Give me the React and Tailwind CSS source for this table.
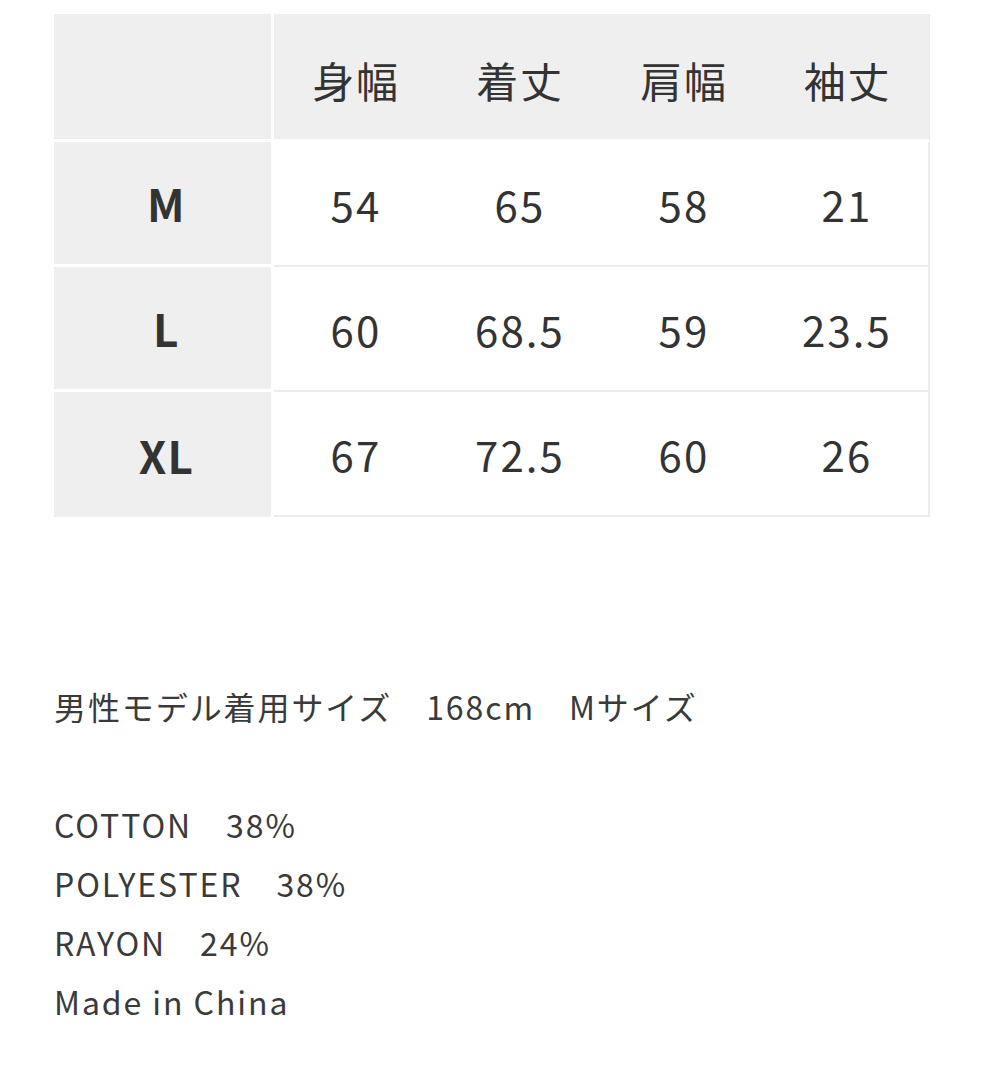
import React from 'react'

const headers = ['身幅', '着丈', '肩幅', '袖丈']
const rows = [
  { size: 'M', values: ['54', '65', '58', '21'] },
  { size: 'L', values: ['60', '68.5', '59', '23.5'] },
  { size: 'XL', values: ['67', '72.5', '60', '26'] },
]

const font = { fontFamily: '"Noto Sans CJK JP", "Noto Sans", sans-serif' }

const App = () => {
  return (
    <div className="min-h-screen bg-white text-[#333]" style={font}>
      <div className="ml-[54px] pt-[14px] w-[876px]">
        {/* Size table */}
        <div className="grid grid-cols-[220px_repeat(4,1fr)]">
          <div className="h-[128px] bg-[#efefef] border-r-[3px] border-b-[3px] border-white" />
          {headers.map((h, i) => (
            <div
              key={h}
              className={`h-[128px] pt-[6px] bg-[#efefef] border-b-[3px] border-white flex items-center justify-center text-[42px] tracking-[0.04em] ${i === 3 ? 'border-r border-r-[#eaeaea]' : ''}`}
            >
              {h}
            </div>
          ))}
          {rows.map((row, r) => (
            <React.Fragment key={row.size}>
              <div
                className={`h-[125px] pl-[8px] bg-[#efefef] border-r-[3px] border-white flex items-center justify-center text-[44px] font-bold tracking-[0.03em] ${r < 2 ? 'border-b-[3px]' : ''}`}
              >
                {row.size}
              </div>
              {row.values.map((v, i) => (
                <div
                  key={i}
                  className={`h-[125px] bg-white border-b-2 border-[#ececec] flex items-center justify-center text-[42px] tracking-[0.05em] ${i === 3 ? 'border-r-2' : ''}`}
                >
                  {v}
                </div>
              ))}
            </React.Fragment>
          ))}
        </div>

        {/* Notes */}
        <div className="mt-[160px] text-[32px] leading-[59px] tracking-[0.06em] text-[#3a3a3a]">
          <p>男性モデル着用サイズ　168cm　Mサイズ</p>
          <p className="h-[59px]" />
          <p>COTTON　38%</p>
          <p>POLYESTER　38%</p>
          <p>RAYON　24%</p>
          <p>Made in China</p>
        </div>
      </div>
    </div>
  )
}

export default App
